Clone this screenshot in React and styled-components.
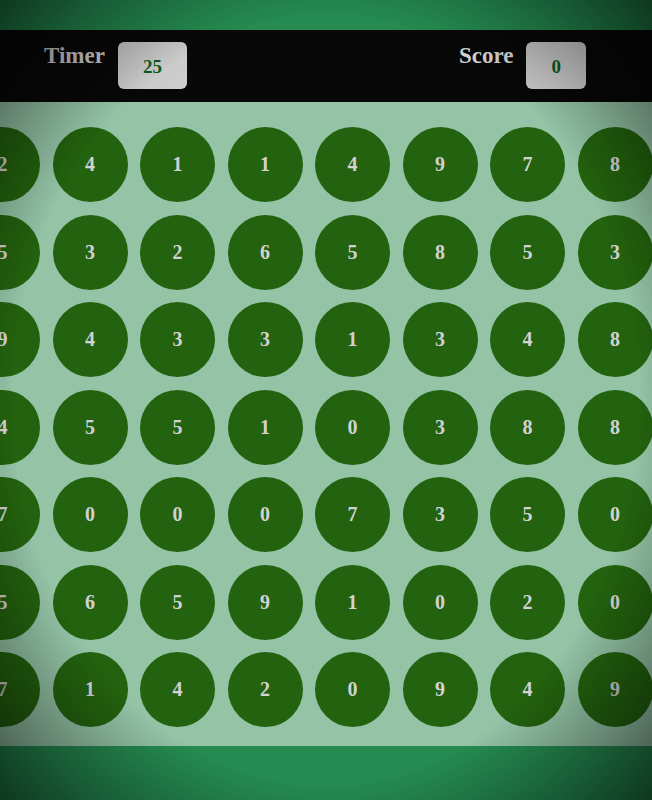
import React from 'react';
import styled, { createGlobalStyle } from 'styled-components';

const board = [
  [2, 4, 1, 1, 4, 9, 7, 8],
  [5, 3, 2, 6, 5, 8, 5, 3],
  [9, 4, 3, 3, 1, 3, 4, 8],
  [4, 5, 5, 1, 0, 3, 8, 8],
  [7, 0, 0, 0, 7, 3, 5, 0],
  [5, 6, 5, 9, 1, 0, 2, 0],
  [7, 1, 4, 2, 0, 9, 4, 9],
];

const GlobalStyle = createGlobalStyle`
html, body {
  margin: 0;
  padding: 0;
}
body {
  min-height: 100vh;
  background: #258b50;
  font-family: "Liberation Serif", "Times New Roman", serif;
  overflow: hidden;
}
`;

const Page = styled.div`
min-height: 100vh;
padding-top: 30px;
box-sizing: border-box;
`;

const Vignette = styled.div`
position: fixed;
inset: 0;
pointer-events: none;
background: radial-gradient(ellipse farthest-corner at center, rgba(0, 0, 0, 0) 68%, rgba(0, 0, 0, .6) 100%);
`;

const Header = styled.header`
display: flex;
align-items: flex-start;
gap: 272px;
height: 72px;
box-sizing: border-box;
padding: 12px 0 0 44px;
background: #080808;
`;

const Stat = styled.div`
display: flex;
align-items: flex-start;
gap: 13px;
`;

const Label = styled.span`
font-size: 23px;
font-weight: 700;
line-height: 28px;
color: #cfcfcf;
`;

const Counter = styled.div`
display: flex;
align-items: center;
justify-content: center;
height: 47px;
padding: 2px 25px 0;
box-sizing: border-box;
border-radius: 6px;
background: linear-gradient(135deg, #c2c2c2, #cfcfcf);
font-size: 19px;
font-weight: 700;
color: #0c5a22;
`;

const Board = styled.main`
display: flex;
flex-direction: column;
gap: 12.5px;
height: 644px;
box-sizing: border-box;
padding: 25px 0 19px;
background: #94c3a6;
overflow: hidden;
`;

const Row = styled.div`
display: flex;
gap: 12.5px;
margin-left: -35px;
`;

const Cell = styled.div`
flex: none;
display: flex;
align-items: center;
justify-content: center;
width: 75px;
height: 75px;
border-radius: 50%;
background: #23620e;
font-size: 20px;
font-weight: 700;
color: #d2d2d2;
`;

const App = () => (
  <Page>
    <GlobalStyle />
    <Header>
      <Stat>
        <Label>Timer</Label>
        <Counter>25</Counter>
      </Stat>
      <Stat>
        <Label>Score</Label>
        <Counter>0</Counter>
      </Stat>
    </Header>
    <Board>
      {board.map((row, i) => (
        <Row key={i}>
          {row.map((n, j) => (
            <Cell key={j}>{n}</Cell>
          ))}
        </Row>
      ))}
    </Board>
    <Vignette />
  </Page>
);

export default App;
